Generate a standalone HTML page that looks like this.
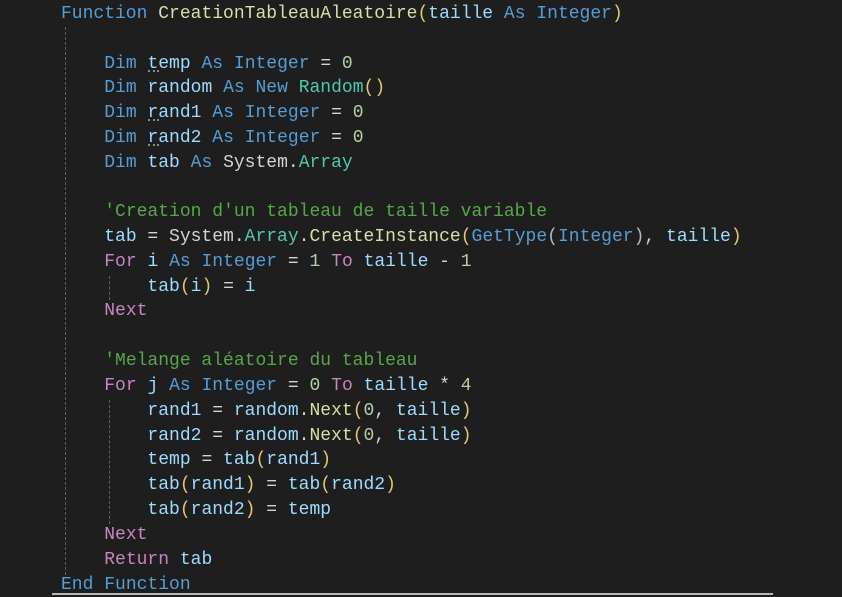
<!DOCTYPE html>
<html><head><meta charset="utf-8"><style>
html,body{margin:0;padding:0;}
body{width:842px;height:595px;background:#1e1e1e;position:relative;overflow:hidden;
font-family:"Liberation Mono",monospace;font-size:18px;}
.l{position:absolute;left:61px;white-space:pre;line-height:24px;height:24px;color:#d4d4d4;margin-top:2px;}
.k{color:#569cd6}.c{color:#c586c0}.v{color:#9cdcfe}.f{color:#dcdcaa}.t{color:#4ec9b0}
.n{color:#b5cea8}.g{color:#57a64a}.p{color:#e0c870}.p2{color:#b0b8d0}
.guide{position:absolute;width:0;border-left:1px dashed #606060;}
.dots{position:absolute;height:2px;width:11px;border-bottom:2px dotted #8a8a8a;}
</style></head><body>
<div class="guide" style="left:65px;top:27px;height:548px"></div>
<div class="guide" style="left:109px;top:276px;height:24px"></div>
<div class="guide" style="left:109px;top:400px;height:124px"></div>
<div class="dots" style="left:148px;top:68px"></div>
<div class="dots" style="left:148px;top:117px"></div>
<div class="dots" style="left:148px;top:142px"></div>

<div class="l" style="top:0px"><span class="k">Function</span> <span class="f">CreationTableauAleatoire</span><span class="p">(</span><span class="v">taille</span> <span class="k">As</span> <span class="k">Integer</span><span class="p">)</span></div>
<div class="l" style="top:50px">    <span class="k">Dim</span> <span class="v">temp</span> <span class="k">As</span> <span class="k">Integer</span> = <span class="n">0</span></div>
<div class="l" style="top:74px">    <span class="k">Dim</span> <span class="v">random</span> <span class="k">As</span> <span class="k">New</span> <span class="t">Random</span><span class="p">()</span></div>
<div class="l" style="top:99px">    <span class="k">Dim</span> <span class="v">rand1</span> <span class="k">As</span> <span class="k">Integer</span> = <span class="n">0</span></div>
<div class="l" style="top:124px">    <span class="k">Dim</span> <span class="v">rand2</span> <span class="k">As</span> <span class="k">Integer</span> = <span class="n">0</span></div>
<div class="l" style="top:149px">    <span class="k">Dim</span> <span class="v">tab</span> <span class="k">As</span> System.<span class="t">Array</span></div>
<div class="l" style="top:198px">    <span class="g">'Creation d'un tableau de taille variable</span></div>
<div class="l" style="top:223px">    <span class="v">tab</span> = System.<span class="t">Array</span>.<span class="f">CreateInstance</span><span class="p">(</span><span class="k">GetType</span><span class="p2">(</span><span class="k">Integer</span><span class="p2">)</span>, <span class="v">taille</span><span class="p">)</span></div>
<div class="l" style="top:248px">    <span class="c">For</span> <span class="v">i</span> <span class="k">As</span> <span class="k">Integer</span> = <span class="n">1</span> <span class="c">To</span> <span class="v">taille</span> - <span class="n">1</span></div>
<div class="l" style="top:273px">        <span class="v">tab</span><span class="p">(</span><span class="v">i</span><span class="p">)</span> = <span class="v">i</span></div>
<div class="l" style="top:297px">    <span class="c">Next</span></div>
<div class="l" style="top:347px">    <span class="g">'Melange aléatoire du tableau</span></div>
<div class="l" style="top:372px">    <span class="c">For</span> <span class="v">j</span> <span class="k">As</span> <span class="k">Integer</span> = <span class="n">0</span> <span class="c">To</span> <span class="v">taille</span> * <span class="n">4</span></div>
<div class="l" style="top:397px">        <span class="v">rand1</span> = <span class="v">random</span>.<span class="f">Next</span><span class="p">(</span><span class="n">0</span>, <span class="v">taille</span><span class="p">)</span></div>
<div class="l" style="top:422px">        <span class="v">rand2</span> = <span class="v">random</span>.<span class="f">Next</span><span class="p">(</span><span class="n">0</span>, <span class="v">taille</span><span class="p">)</span></div>
<div class="l" style="top:446px">        <span class="v">temp</span> = <span class="v">tab</span><span class="p">(</span><span class="v">rand1</span><span class="p">)</span></div>
<div class="l" style="top:471px">        <span class="v">tab</span><span class="p">(</span><span class="v">rand1</span><span class="p">)</span> = <span class="v">tab</span><span class="p">(</span><span class="v">rand2</span><span class="p">)</span></div>
<div class="l" style="top:496px">        <span class="v">tab</span><span class="p">(</span><span class="v">rand2</span><span class="p">)</span> = <span class="v">temp</span></div>
<div class="l" style="top:521px">    <span class="c">Next</span></div>
<div class="l" style="top:546px">    <span class="c">Return</span> <span class="v">tab</span></div>
<div class="l" style="top:571px"><span class="k">End</span> <span class="k">Function</span></div>
<div style="position:absolute;left:52px;top:593px;width:721px;height:2px;background:#b8b8b8"></div>
</body></html>
